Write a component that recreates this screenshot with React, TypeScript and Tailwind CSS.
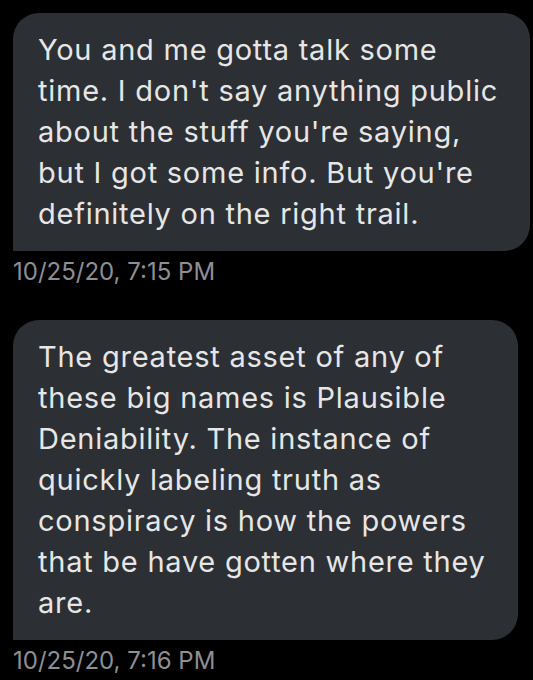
const messages = [
  {
    lines: [
      "You and me gotta talk some",
      "time. I don't say anything public",
      "about the stuff you're saying,",
      "but I got some info. But you're",
      "definitely on the right trail.",
    ],
    time: "10/25/20, 7:15 PM",
  },
  {
    lines: [
      "The greatest asset of any of",
      "these big names is Plausible",
      "Deniability. The instance of",
      "quickly labeling truth as",
      "conspiracy is how the powers",
      "that be have gotten where they",
      "are.",
    ],
    time: "10/25/20, 7:16 PM",
  },
];

const App = () => {
  return (
    <div className="min-h-screen w-full bg-black pt-[13px] pl-[13px] font-['Inter',_'Liberation_Sans',_sans-serif]">
      {messages.map((m, i) => (
        <div key={i} className={i > 0 ? "mt-[34px]" : ""}>
          {/* Bubble */}
          <div className="w-fit rounded-[26px] rounded-bl-none bg-[#2c2f33] pt-[16px] pb-[17px] pl-[25px] pr-[32px]">
            {m.lines.map((line, j) => (
              <div key={j} className="whitespace-nowrap text-[29px] leading-[41px] tracking-[0.75px] text-[#e6e6e6]">
                {line}
              </div>
            ))}
          </div>
          {/* Timestamp */}
          <div className="mt-[7px] text-[24px] leading-[28px] text-[#8e8e93]">{m.time}</div>
        </div>
      ))}
    </div>
  );
};

export default App;
